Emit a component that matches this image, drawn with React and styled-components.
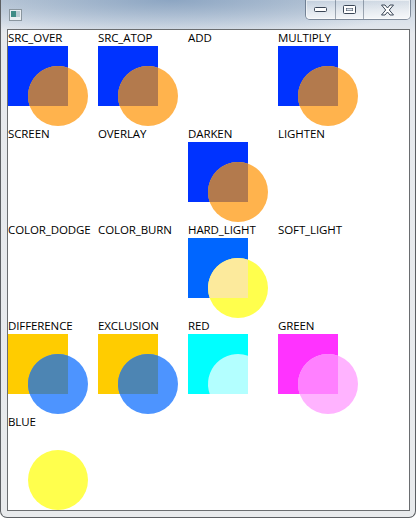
import React from "react";
import styled, { createGlobalStyle } from "styled-components";

const Global = createGlobalStyle`
  html, body { margin: 0; padding: 0; background: #ffffff; }
  body { width: 416px; height: 518px; overflow: hidden; }
`;

const Window = styled.div`
  box-sizing: border-box;
  width: 416px;
  height: 518px;
  display: flex;
  flex-direction: column;
  border: 1px solid #5c5f63;
  border-top: none;
  border-radius: 0 0 7px 7px;
  padding: 0 5px 6px 6px;
  background:
    radial-gradient(ellipse 260px 38px at 170px 0px, rgba(120, 150, 185, 0.75), rgba(120, 150, 185, 0) 100%),
    linear-gradient(to bottom, #c9d3de 0px, #dbe2ea 22px, #e6e9ed 34px, #e8eaec 100%);
`;

const TitleBar = styled.div`
  height: 29px;
  flex: 0 0 29px;
  display: flex;
  align-items: flex-start;
  justify-content: space-between;
`;

const AppIcon = styled.svg`
  margin: 9px 0 0 2px;
  width: 13px;
  height: 12px;
`;

const Caption = styled.div`
  display: flex;
  height: 19px;
  margin-right: -1px;
  border: 1px solid rgba(60, 75, 95, 0.55);
  border-top: none;
  border-radius: 0 0 5px 5px;
  overflow: hidden;
  box-shadow: inset 0 0 0 1px rgba(255, 255, 255, 0.55);
`;

const CapButton = styled.div`
  width: ${(p) => p.$w}px;
  display: flex;
  align-items: center;
  justify-content: center;
  background: linear-gradient(to bottom, rgba(255,255,255,0.25), rgba(255,255,255,0.55) 55%, rgba(255,255,255,0.75));
  & + & { border-left: 1px solid rgba(60, 75, 95, 0.45); }
`;

const Content = styled.div`
  flex: 1;
  border: 1px solid #6a6d70;
  background: #ffffff;
  overflow: hidden;
  padding: 0;
`;

const Grid = styled.div`
  display: grid;
  grid-template-columns: repeat(4, 90px);
  grid-auto-rows: 96px;
`;

const Cell = styled.div`
  display: flex;
  flex-direction: column;
`;

const Label = styled.div`
  height: 16px;
  font-family: "Open Sans", "Noto Sans", sans-serif;
  font-size: 11.5px;
  line-height: 16px;
  color: #000000;
  white-space: nowrap;
  letter-spacing: -0.1px;
`;

const Swatch = styled.svg`
  display: block;
  width: 80px;
  height: 80px;
  overflow: visible;
`;

const OVERLAP = "M60 60 L60 21.716 A30 30 0 0 0 21.716 60 Z";

const blue = { sq: "#0033ff", c: "#ffb34d", ov: "#b37a4d" };

const modes = [
  { name: "SRC_OVER", ...blue },
  { name: "SRC_ATOP", ...blue },
  { name: "ADD" },
  { name: "MULTIPLY", ...blue },
  { name: "SCREEN" },
  { name: "OVERLAY" },
  { name: "DARKEN", ...blue },
  { name: "LIGHTEN" },
  { name: "COLOR_DODGE" },
  { name: "COLOR_BURN" },
  { name: "HARD_LIGHT", sq: "#0066ff", c: "#ffff4d", ov: "#fcea9c" },
  { name: "SOFT_LIGHT" },
  { name: "DIFFERENCE", sq: "#ffcc00", c: "#4d94ff", ov: "#4d85b3" },
  { name: "EXCLUSION", sq: "#ffcc00", c: "#4d94ff", ov: "#4d85b3" },
  { name: "RED", sq: "#00ffff", ov: "#b3ffff" },
  { name: "GREEN", sq: "#ff33ff", c: "#ffb3ff", ov: "#ff80ff" },
  { name: "BLUE", c: "#ffff4d" },
];

function Sample({ m }) {
  return (
    <Swatch viewBox="0 0 80 80">
      {m.sq && <rect x="0" y="0" width="60" height="60" fill={m.sq} />}
      {m.c && <circle cx="50" cy="50" r="30" fill={m.c} />}
      {m.sq && m.ov && <path d={OVERLAP} fill={m.ov} />}
    </Swatch>
  );
}

export default function App() {
  return (
    <>
      <Global />
      <Window>
        <TitleBar>
          <AppIcon viewBox="0 0 13 12">
            <rect x="0.5" y="0.5" width="12" height="11" fill="#e9eef2" stroke="#8a969f" />
            <rect x="2" y="2" width="5" height="6" fill="#3f8c86" />
            <rect x="7" y="2" width="4" height="6" fill="#b9cbd2" />
          </AppIcon>
          <Caption>
            <CapButton $w={29}>
              <svg width="13" height="5" viewBox="0 0 13 5">
                <rect x="0.5" y="0.5" width="12" height="4" rx="1" fill="#ffffff" stroke="#3a4656" />
              </svg>
            </CapButton>
            <CapButton $w={27}>
              <svg width="13" height="9" viewBox="0 0 13 9">
                <rect x="0.5" y="0.5" width="12" height="8" rx="1" fill="#ffffff" stroke="#3a4656" />
                <rect x="3" y="3" width="7" height="3" fill="#3a4656" />
                <rect x="3.5" y="3.5" width="6" height="2" fill="#dfe6ee" />
              </svg>
            </CapButton>
            <CapButton $w={46}>
              <svg width="15" height="12" viewBox="0 0 15 12">
                <path d="M1.5 1 L5 1 L7.5 4 L10 1 L13.5 1 L9.3 6 L13.5 11 L10 11 L7.5 8 L5 11 L1.5 11 L5.7 6 Z" fill="#ffffff" stroke="#3a4656" strokeWidth="1" strokeLinejoin="round" />
              </svg>
            </CapButton>
          </Caption>
        </TitleBar>
        <Content>
          <Grid>
            {modes.map((m) => (
              <Cell key={m.name}>
                <Label>{m.name}</Label>
                <Sample m={m} />
              </Cell>
            ))}
          </Grid>
        </Content>
      </Window>
    </>
  );
}
